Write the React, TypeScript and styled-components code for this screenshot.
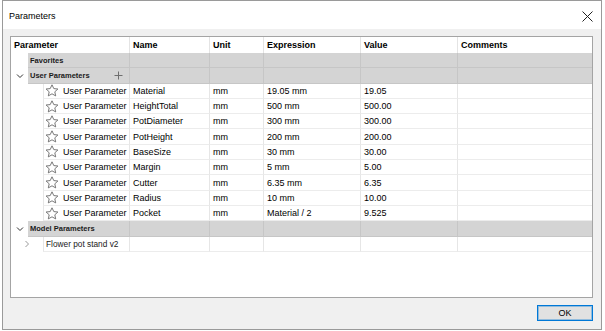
import styled, { createGlobalStyle } from "styled-components";

const GlobalStyle = createGlobalStyle`
  html, body {
    margin: 0;
    padding: 0;
    background: #ffffff;
  }
  body {
    font-family: "Liberation Sans", Arial, sans-serif;
    color: #000;
  }
`;

const COLS = "119px 80px 54px 97px 97px 1fr";

const Page = styled.div`
  width: 605px;
  height: 331px;
  padding-left: 2px;
  box-sizing: border-box;
`;

const Window = styled.div`
  width: 600px;
  height: 330px;
  box-sizing: border-box;
  border: 1px solid #9a9a9a;
  background: #f0f0f0;
  display: flex;
  flex-direction: column;
`;

const TitleBar = styled.div`
  height: 28px;
  background: #ffffff;
  display: flex;
  align-items: center;
  justify-content: space-between;
  padding: 2px 8px 0 6px;
  box-sizing: border-box;
  font-size: 9px;
`;

const Body = styled.div`
  flex: 1;
  display: flex;
  flex-direction: column;
  padding: 7px 8px 0 7px;
`;

const Table = styled.div`
  height: 262px;
  box-sizing: border-box;
  border: 1px solid #a4a4a4;
  background: #ffffff;
  overflow: hidden;
`;

const Row = styled.div<{ $h: number }>`
  display: grid;
  grid-template-columns: ${COLS};
  height: ${(p) => p.$h}px;
`;

const HeaderCell = styled.div`
  display: flex;
  align-items: center;
  padding-left: 3px;
  border-right: 1px solid #e4e4e4;
  font-size: 9px;
  font-weight: bold;
  &:last-child {
    border-right: none;
  }
`;

const FirstCol = styled.div`
  display: flex;
  min-width: 0;
`;

const Indent = styled.div<{ $w: number }>`
  width: ${(p) => p.$w}px;
  flex: none;
  display: flex;
  align-items: center;
  justify-content: center;
`;

const GroupLabel = styled.div`
  flex: 1;
  display: flex;
  align-items: center;
  justify-content: space-between;
  padding: 0 6px 0 2px;
  background: #d4d4d4;
  border-right: 1px solid #c6c6c6;
  border-bottom: 1px solid #c6c6c6;
  font-size: 7.5px;
  font-weight: bold;
  color: #1a1a1a;
`;

const GroupCell = styled.div`
  background: #d4d4d4;
  border-right: 1px solid #c6c6c6;
  border-bottom: 1px solid #c6c6c6;
  &:last-child {
    border-right: none;
  }
`;

const ParamCell = styled.div`
  flex: 1;
  display: flex;
  align-items: center;
  gap: 4px;
  padding-left: 1px;
  border-left: 1px solid #e6e6e6;
  border-right: 1px solid #e6e6e6;
  border-bottom: 1px solid #ececec;
  font-size: 9px;
  white-space: nowrap;
`;

const ModelCell = styled(ParamCell)`
  padding-left: 2px;
  font-size: 8.3px;
  color: #1a1a1a;
`;

const DataCell = styled.div`
  display: flex;
  align-items: center;
  padding-left: 3px;
  border-right: 1px solid #e6e6e6;
  border-bottom: 1px solid #ececec;
  font-size: 9px;
  white-space: nowrap;
  &:last-child {
    border-right: none;
  }
`;

const Footer = styled.div`
  display: flex;
  justify-content: flex-end;
  padding-top: 7px;
`;

const OkButton = styled.button`
  width: 56px;
  height: 16px;
  box-sizing: border-box;
  border: 1px solid #0078d7;
  box-shadow: inset 0 0 0 1px rgba(0, 120, 215, 0.35);
  background: #e1e1e1;
  font-family: "Liberation Sans", Arial, sans-serif;
  font-size: 9px;
  padding: 0;
  color: #000;
`;

const Star = () => (
  <svg width="14" height="13" viewBox="0 0 14 13">
    <polygon
      points="7,0.8 8.8,4.6 12.9,5 9.8,7.8 10.7,11.9 7,9.8 3.3,11.9 4.2,7.8 1.1,5 5.2,4.6"
      fill="none"
      stroke="#6a6a6a"
      strokeWidth="0.9"
      strokeLinejoin="round"
    />
  </svg>
);

const ChevronDown = () => (
  <svg width="8" height="6" viewBox="0 0 8 6">
    <polyline points="1,1.5 4,4.5 7,1.5" fill="none" stroke="#333" strokeWidth="1" />
  </svg>
);

const ChevronRight = () => (
  <svg width="6" height="8" viewBox="0 0 6 8">
    <polyline points="1.5,1 4.5,4 1.5,7" fill="none" stroke="#9a9a9a" strokeWidth="1" />
  </svg>
);

const Plus = () => (
  <svg width="9" height="9" viewBox="0 0 9 9">
    <path d="M4.5 0.5 V8.5 M0.5 4.5 H8.5" stroke="#6e6e6e" strokeWidth="1" />
  </svg>
);

const CloseIcon = () => (
  <svg width="11" height="11" viewBox="0 0 11 11">
    <path d="M0.5 0.5 L10.5 10.5 M10.5 0.5 L0.5 10.5" stroke="#222" strokeWidth="1" />
  </svg>
);

const params = [
  ["Material", "mm", "19.05 mm", "19.05"],
  ["HeightTotal", "mm", "500 mm", "500.00"],
  ["PotDiameter", "mm", "300 mm", "300.00"],
  ["PotHeight", "mm", "200 mm", "200.00"],
  ["BaseSize", "mm", "30 mm", "30.00"],
  ["Margin", "mm", "5 mm", "5.00"],
  ["Cutter", "mm", "6.35 mm", "6.35"],
  ["Radius", "mm", "10 mm", "10.00"],
  ["Pocket", "mm", "Material / 2", "9.525"],
];

const ROW_H = 15.3;

const GroupRow = ({ label, chevron, plus }: { label: string; chevron?: boolean; plus?: boolean }) => (
  <Row $h={ROW_H}>
    <FirstCol>
      <Indent $w={17}>{chevron && <ChevronDown />}</Indent>
      <GroupLabel>
        <span>{label}</span>
        {plus && <Plus />}
      </GroupLabel>
    </FirstCol>
    <GroupCell />
    <GroupCell />
    <GroupCell />
    <GroupCell />
    <GroupCell />
  </Row>
);

const App = () => {
  return (
    <Page>
      <GlobalStyle />
      <Window>
        <TitleBar>
          <span>Parameters</span>
          <CloseIcon />
        </TitleBar>
        <Body>
          <Table>
            <Row $h={16}>
              <HeaderCell>Parameter</HeaderCell>
              <HeaderCell>Name</HeaderCell>
              <HeaderCell>Unit</HeaderCell>
              <HeaderCell>Expression</HeaderCell>
              <HeaderCell>Value</HeaderCell>
              <HeaderCell>Comments</HeaderCell>
            </Row>
            <GroupRow label="Favorites" />
            <GroupRow label="User Parameters" chevron plus />
            {params.map(([name, unit, expr, value]) => (
              <Row $h={ROW_H} key={name}>
                <FirstCol>
                  <Indent $w={32} />
                  <ParamCell>
                    <Star />
                    <span>User Parameter</span>
                  </ParamCell>
                </FirstCol>
                <DataCell>{name}</DataCell>
                <DataCell>{unit}</DataCell>
                <DataCell>{expr}</DataCell>
                <DataCell>{value}</DataCell>
                <DataCell />
              </Row>
            ))}
            <GroupRow label="Model Parameters" chevron />
            <Row $h={ROW_H}>
              <FirstCol>
                <Indent $w={32}>
                  <ChevronRight />
                </Indent>
                <ModelCell>Flower pot stand v2</ModelCell>
              </FirstCol>
              <DataCell />
              <DataCell />
              <DataCell />
              <DataCell />
              <DataCell />
            </Row>
          </Table>
          <Footer>
            <OkButton>OK</OkButton>
          </Footer>
        </Body>
      </Window>
    </Page>
  );
};

export default App;
